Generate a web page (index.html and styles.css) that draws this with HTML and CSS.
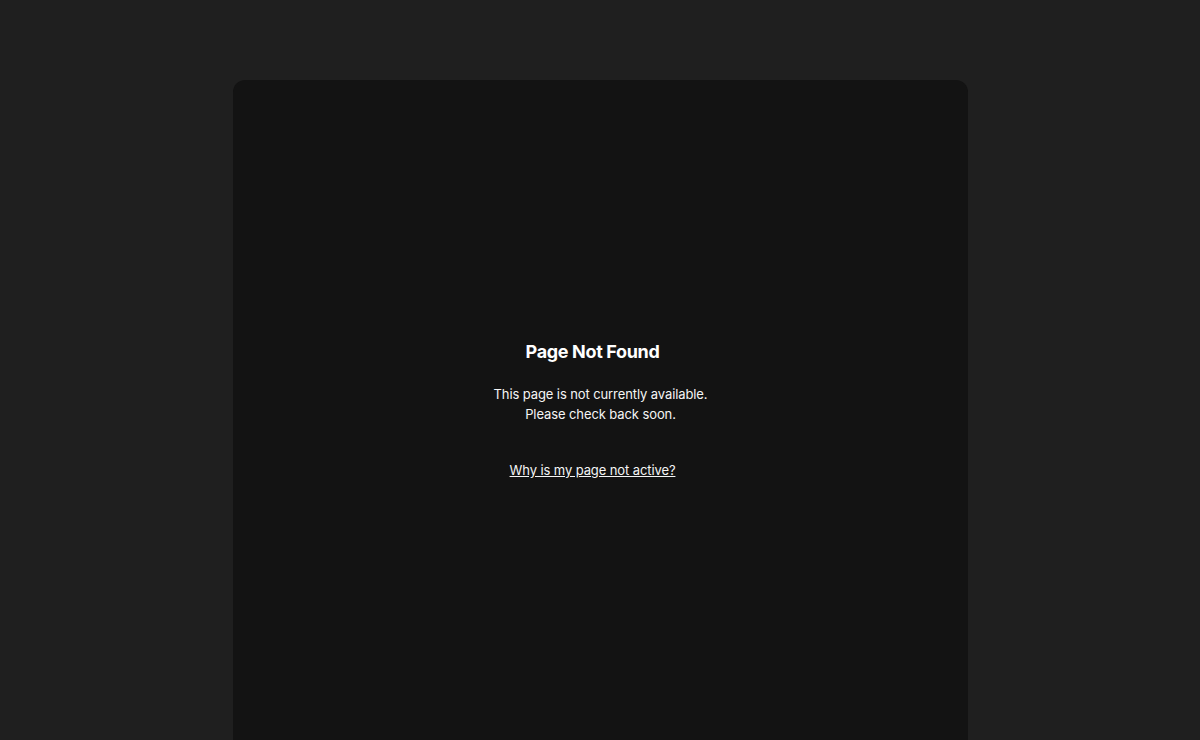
FILE: index.html
```html
<!DOCTYPE html>
<html>
<head>
<meta charset="utf-8">
<link rel="stylesheet" href="styles.css">
</head>
<body>
<main class="card">
  <div class="content">
    <h1 class="title">Page Not Found</h1>
    <p class="text">This page is not currently available.<br>Please check back soon.</p>
    <a class="link" href="#">Why is my page not active?</a>
  </div>
</main>
</body>
</html>
```
FILE: styles.css
```css
html, body {
  margin: 0;
  padding: 0;
  background: #1f1f1f;
  height: 100%;
  overflow: hidden;
}
body {
  font-family: Inter, "Noto Sans", sans-serif;
  color: #f2f2f2;
  padding-top: 80px;
  box-sizing: border-box;
}
.card {
  width: 735px;
  margin-left: 233px;
  height: 680px;
  box-sizing: border-box;
  padding-top: 261px;
  background: #131313;
  border-radius: 12px 12px 0 0;
}
.content {
  display: flex;
  flex-direction: column;
  align-items: center;
  text-align: center;
}
.title {
  font-size: 18px;
  font-weight: 700;
  margin: 0 16px 0 0;
  line-height: 22px;
  color: #ffffff;
  letter-spacing: -0.35px;
}
.text {
  font-size: 13px;
  line-height: 20px;
  letter-spacing: -0.1px;
  margin: 21px 0 0 0;
  color: #f5f5f5;
}
.link {
  margin: 36px 16px 0 0;
  font-size: 13px;
  line-height: 20px;
  letter-spacing: -0.1px;
  color: #f5f5f5;
  text-decoration: underline;
}
```
